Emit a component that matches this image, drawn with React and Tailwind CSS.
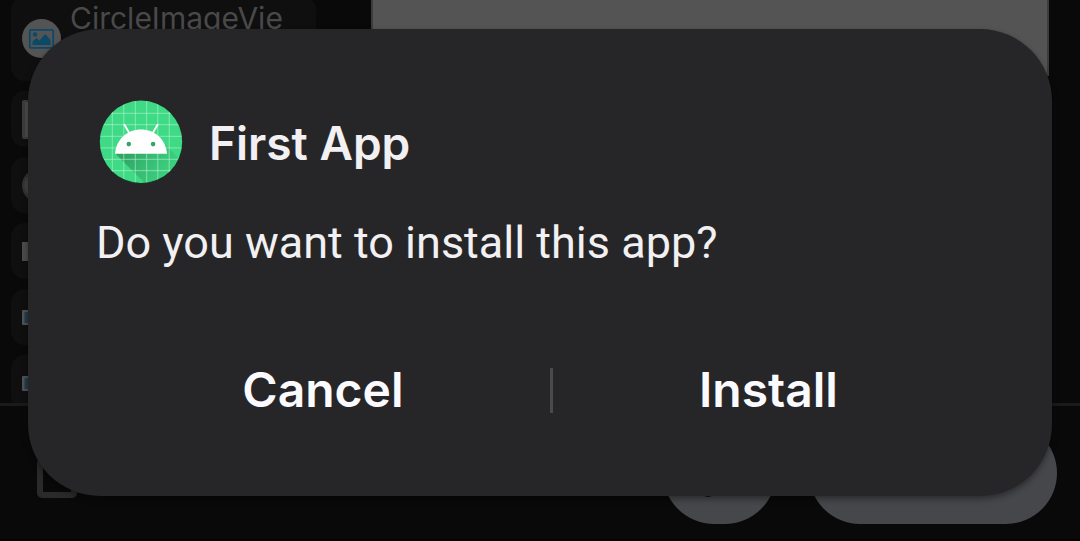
import React from "react";
import clsx from "clsx";

function ImageGlyph() {
  return (
    <svg viewBox="0 0 39 39" className="size-[39px]" aria-hidden="true">
      <circle cx="19.5" cy="19.5" r="19.5" fill="#545454" />
      <rect x="7.8" y="10.8" width="23.4" height="18" rx="1" fill="none" stroke="#0a4a68" strokeWidth="1.8" />
      <circle cx="13" cy="15.5" r="2.3" fill="#0a4a68" />
      <path d="M10.5 26v-3.5l4-3.5 3 2.5 5.7-6.5 5.3 6V26z" fill="#0a4a68" />
    </svg>
  );
}

const PALETTE = [
  <svg key="panel" viewBox="0 0 39 39" className="size-[39px]">
    <rect width="39" height="39" rx="2" fill="#3c3c3c" />
    <rect x="3" y="2" width="33" height="35" fill="#4e4e4e" />
  </svg>,
  <svg key="knob" viewBox="0 0 39 39" className="size-[39px]">
    <ellipse cx="19.5" cy="19.5" rx="19.5" ry="18" fill="#333" />
    <ellipse cx="19.5" cy="19.5" rx="17" ry="15" fill="#424242" />
  </svg>,
  <svg key="bar" viewBox="0 0 39 39" className="size-[39px]">
    <rect y="10" width="39" height="19" fill="#4c4c4c" />
  </svg>,
  <svg key="field" viewBox="0 0 39 39" className="size-[39px]">
    <rect y="12" width="39" height="15" rx="1" fill="#505254" />
    <rect x="2.5" y="14" width="34" height="11" fill="#243b4c" />
  </svg>,
  <svg key="input" viewBox="0 0 39 39" className="size-[39px]">
    <rect y="12" width="39" height="15" rx="1" fill="#505254" />
    <rect x="2.5" y="14" width="34" height="11" fill="#243b4c" />
  </svg>,
];

function Editor() {
  return (
    <div className="flex h-screen flex-col" aria-hidden="true">
      <div className="flex min-h-0 flex-1 items-start overflow-hidden pl-[11px] pr-[31px]">
        <ul className="-mt-1 flex w-[305px] shrink-0 flex-col gap-[10px]">
          <li className="flex h-[85px] items-center gap-[9px] rounded-[14px] bg-[#0f0f0f] pl-[11px]">
            <ImageGlyph />
            <span className="self-start pt-1 font-['Inter','Roboto',sans-serif] text-[30px] leading-[36px] text-[#494949]">
              CircleImageVie
            </span>
          </li>
          {PALETTE.map((glyph) => (
            <li key={glyph.key} className="flex h-14 items-center rounded-[14px] bg-[#0f0f0f] pl-[11px]">
              {glyph}
            </li>
          ))}
        </ul>
        <div className="ml-[55px] h-[76px] flex-1 border-x-2 border-[#3c3c3c] bg-[#545454]" />
      </div>
      <div className="flex h-[138px] shrink-0 items-start justify-between border-b-2 border-t-[3px] border-b-[#050001] border-t-[#1a1a1a] pl-[37px] pr-[23px] pt-4">
        <div className="mt-9 h-10 w-10 rounded-[5px] border-[6px] border-[#2a2a2a]" />
        <div className="flex gap-[33px]">
          <div className="flex h-[102px] w-[113px] items-center justify-center rounded-full bg-[#46474b]">
            <svg viewBox="0 0 48 48" className="size-12">
              <path d="M10 43l9-14 5 6z" fill="#111" />
              <ellipse cx="12" cy="45" rx="5" ry="3" fill="#111" />
            </svg>
          </div>
          <div className="h-[102px] w-[248px] rounded-full bg-[#46474b]" />
        </div>
      </div>
    </div>
  );
}

function AppIcon() {
  const vertical = [17.3, 28.8, 40.3, 51.7, 62.8, 74.2];
  const horizontal = [18, 29.4, 41, 52.6, 64, 75.4];
  return (
    <svg viewBox="4 4.7 84 84" className="size-[84px] shrink-0" aria-hidden="true">
      <defs>
        <clipPath id="disc">
          <circle cx="46" cy="46.5" r="41.2" />
        </clipPath>
        <linearGradient id="cast" gradientUnits="userSpaceOnUse" x1="36" y1="54" x2="72" y2="80">
          <stop offset="0" stopColor="#2f9a60" stopOpacity="0.85" />
          <stop offset="1" stopColor="#38c477" stopOpacity="0.5" />
        </linearGradient>
      </defs>
      <circle cx="46" cy="47.3" r="41.2" fill="#173d28" />
      <circle cx="46" cy="46.5" r="41.2" fill="#3fda85" />
      <g clipPath="url(#disc)">
        <path d="M20.5 58.5L53 91H90V70L67 46z" fill="url(#cast)" />
        {vertical.map((x) => (
          <path key={x} d={`M${x} 4V90`} stroke="#b5f5d2" strokeOpacity="0.6" strokeWidth="1" />
        ))}
        {horizontal.map((y) => (
          <path key={y} d={`M4 ${y}H90`} stroke="#b5f5d2" strokeOpacity="0.6" strokeWidth="1" />
        ))}
      </g>
      <path d="M20 58.4C21 44.5 32 34.2 46 34.2S71 44.5 72 58.4z" fill="#fff" />
      <path d="M29.4 29.4l5 8.6M62.6 29.4l-5 8.6" stroke="#fff" strokeWidth="1.9" strokeLinecap="round" />
      <circle cx="33.8" cy="48.8" r="2.3" fill="#34a667" />
      <circle cx="58.1" cy="48.8" r="2.3" fill="#34a667" />
    </svg>
  );
}

function DialogButton({ children, className }) {
  return (
    <button
      type="button"
      className={clsx(
        "font-['Inter','Roboto',sans-serif] text-[48px] font-semibold leading-[64px] text-[#fbfaff]",
        className
      )}
    >
      {children}
    </button>
  );
}

export default function App() {
  return (
    <main className="relative min-h-screen overflow-hidden bg-[#090909]">
      <Editor />
      <section
        role="dialog"
        aria-modal="true"
        aria-labelledby="dialog-title"
        aria-describedby="dialog-message"
        className="absolute inset-x-7 top-[29px] rounded-[72px] bg-[#262628] px-[68px] pb-[74px] pt-[71px] shadow-[0_3px_6px_rgba(0,0,0,0.4)]"
      >
        <header className="flex items-center gap-[26px] pl-[3px]">
          <AppIcon />
          <h1
            id="dialog-title"
            className="pt-[2px] font-['Inter','Roboto',sans-serif] text-[46px] font-semibold leading-[60px] text-[#f2f0f2]"
          >
            First App
          </h1>
        </header>
        <p
          id="dialog-message"
          className="mt-[29px] font-['Roboto',sans-serif] text-[45px] leading-[60px] text-[#f2f0f2]"
        >
          Do you want to install this app?
        </p>
        <div className="mt-[85px] flex items-center">
          <DialogButton className="flex-[20]">Cancel</DialogButton>
          <div className="h-[45px] w-[3px] bg-[#4a4a4c]" />
          <DialogButton className="flex-[19]">Install</DialogButton>
        </div>
      </section>
    </main>
  );
}
